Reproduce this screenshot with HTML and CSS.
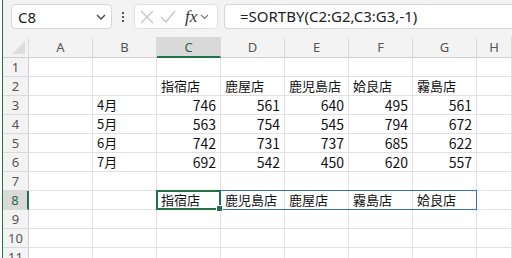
FILE: index.html
```html
<!DOCTYPE html>
<html lang="ja">
<head>
  <meta charset="UTF-8">
  <title>SORTBY</title>
  <link rel="stylesheet" href="styles.css">
</head>
<body>
  <div class="app">
    <div class="toolbar">
      <div class="namebox">
        <span>C8</span>
        <svg class="chev" width="10" height="6" viewBox="0 0 10 6"><path d="M1 1l4 4 4-4" fill="none" stroke="#444" stroke-width="1.3"/></svg>
      </div>
      <div class="dots"><i></i><i></i><i></i></div>
      <div class="fnbox">
        <svg width="14" height="14" viewBox="0 0 14 14"><path d="M1 1l12 12M13 1L1 13" stroke="#c4c4c4" stroke-width="1.2"/></svg>
        <svg width="16" height="14" viewBox="0 0 16 14"><path d="M1 7l5 5L15 1" fill="none" stroke="#c4c4c4" stroke-width="1.2"/></svg>
        <span class="fx">fx</span>
        <svg width="9" height="6" viewBox="0 0 9 6"><path d="M1 1l3.5 3.5L8 1" fill="none" stroke="#777" stroke-width="1.1"/></svg>
      </div>
      <div class="formula">=SORTBY(C2:G2,C3:G3,-1)</div>
    </div>

    <div class="sheet">
      <div class="hd corner"></div>
      <div class="hd">A</div>
      <div class="hd">B</div>
      <div class="hd active-col">C</div>
      <div class="hd">D</div>
      <div class="hd">E</div>
      <div class="hd">F</div>
      <div class="hd">G</div>
      <div class="hd">H</div>

      <div class="rh">1</div><div class="c"></div><div class="c"></div><div class="c"></div><div class="c"></div><div class="c"></div><div class="c"></div><div class="c"></div><div class="c"></div>

      <div class="rh">2</div><div class="c"></div><div class="c"></div>
      <div class="c">指宿店</div><div class="c">鹿屋店</div><div class="c">鹿児島店</div><div class="c">姶良店</div><div class="c">霧島店</div><div class="c"></div>

      <div class="rh">3</div><div class="c"></div><div class="c">4月</div>
      <div class="c num">746</div><div class="c num">561</div><div class="c num">640</div><div class="c num">495</div><div class="c num">561</div><div class="c"></div>

      <div class="rh">4</div><div class="c"></div><div class="c">5月</div>
      <div class="c num">563</div><div class="c num">754</div><div class="c num">545</div><div class="c num">794</div><div class="c num">672</div><div class="c"></div>

      <div class="rh">5</div><div class="c"></div><div class="c">6月</div>
      <div class="c num">742</div><div class="c num">731</div><div class="c num">737</div><div class="c num">685</div><div class="c num">622</div><div class="c"></div>

      <div class="rh">6</div><div class="c"></div><div class="c">7月</div>
      <div class="c num">692</div><div class="c num">542</div><div class="c num">450</div><div class="c num">620</div><div class="c num">557</div><div class="c"></div>

      <div class="rh">7</div><div class="c"></div><div class="c"></div><div class="c"></div><div class="c"></div><div class="c"></div><div class="c"></div><div class="c"></div><div class="c"></div>

      <div class="rh active-row">8</div><div class="c"></div><div class="c"></div>
      <div class="c active">
        指宿店
        <!-- spill range C8:G8 and active cell -->
        <div class="spill"></div>
        <div class="selected"></div>
      </div>
      <div class="c">鹿児島店</div><div class="c">鹿屋店</div><div class="c">霧島店</div><div class="c">姶良店</div><div class="c"></div>

      <div class="rh">9</div><div class="c"></div><div class="c"></div><div class="c"></div><div class="c"></div><div class="c"></div><div class="c"></div><div class="c"></div><div class="c"></div>

      <div class="rh">10</div><div class="c"></div><div class="c"></div><div class="c"></div><div class="c"></div><div class="c"></div><div class="c"></div><div class="c"></div><div class="c"></div>

      <div class="rh">11</div><div class="c"></div><div class="c"></div><div class="c"></div><div class="c"></div><div class="c"></div><div class="c"></div><div class="c"></div><div class="c"></div>
    </div>
  </div>
</body>
</html>
```

FILE: styles.css
```css
body {
  margin: 0;
  background: #fff;
  overflow: hidden;
  font-family: "Noto Sans", "Noto Sans CJK JP", sans-serif;
}

.app {
  margin-left: 2px;
  border-left: 1px solid #217346;
  height: 258px;
  background: #f3f3f3;
}

.toolbar {
  height: 37px;
  display: flex;
  align-items: flex-start;
  padding-top: 4px;
  box-sizing: border-box;
}

.namebox {
  margin-left: 8px;
  width: 101px;
  height: 25px;
  box-sizing: border-box;
  background: #fff;
  border: 1px solid #d6d6d6;
  border-radius: 4px;
  display: flex;
  align-items: center;
  justify-content: space-between;
  padding: 0 5px 0 6px;
  font-size: 15px;
  color: #222;
}

.namebox .chev { margin-top: 1px; }

.dots {
  width: 22px;
  height: 25px;
  display: flex;
  flex-direction: column;
  align-items: center;
  justify-content: center;
  gap: 2px;
}
.dots i {
  width: 2px;
  height: 2px;
  background: #555;
}

.fnbox {
  width: 84px;
  height: 25px;
  box-sizing: border-box;
  background: #fff;
  border: 1px solid #e0e0e0;
  border-radius: 4px;
  display: flex;
  align-items: center;
  padding-left: 5px;
  gap: 6px;
}
.fnbox .fx {
  font-family: "Liberation Serif", "DejaVu Serif", serif;
  font-style: italic;
  font-weight: normal;
  font-size: 17px;
  color: #333;
  margin-left: 3px;
  margin-right: -3px;
}

.formula {
  margin-left: 6px;
  flex: 1;
  height: 25px;
  box-sizing: border-box;
  background: #fff;
  border: 1px solid #d6d6d6;
  border-right: none;
  border-radius: 4px 0 0 4px;
  padding-left: 15px;
  font-size: 15px;
  line-height: 23px;
  color: #222;
}

.sheet {
  display: grid;
  grid-template-columns: 26px repeat(7, 64px) 1fr;
  grid-template-rows: 21px repeat(11, 19px);
  font-family: "Noto Sans CJK JP", sans-serif;
}

.hd {
  box-sizing: border-box;
  border-right: 1px solid #dadada;
  border-bottom: 1px solid #cfcfcf;
  text-align: center;
  font-family: "Noto Sans", sans-serif;
  font-size: 13px;
  line-height: 20px;
  color: #555;
}

.corner {
  position: relative;
}
.corner::after {
  content: "";
  position: absolute;
  right: 3px;
  bottom: 3px;
  border-style: solid;
  border-width: 0 0 13px 13px;
  border-color: transparent transparent #dcdcdc transparent;
}

.active-col {
  background: #d9d9d9;
  color: #1d6b3f;
  border-bottom: 2px solid #217346;
}

.rh {
  box-sizing: border-box;
  border-right: 1px solid #cfcfcf;
  border-bottom: 1px solid #dadada;
  text-align: center;
  font-family: "Noto Sans", sans-serif;
  font-size: 13px;
  line-height: 18px;
  color: #555;
}

.active-row {
  background: #d9d9d9;
  color: #1d6b3f;
  border-right: 2px solid #217346;
}

.c {
  box-sizing: border-box;
  background: #fff;
  border-right: 1px solid #e1e1e1;
  border-bottom: 1px solid #e1e1e1;
  padding: 0 4px;
  font-size: 13px;
  line-height: 18px;
  color: #111;
  white-space: nowrap;
}

.num {
  text-align: right;
  font-size: 14px;
}

.active {
  position: relative;
}

.spill {
  position: absolute;
  left: -1px;
  top: -1px;
  width: 321px;
  height: 20px;
  box-sizing: border-box;
  border: 1px solid #3c6fc4;
}

.selected {
  position: absolute;
  left: -1px;
  top: -1px;
  width: 65px;
  height: 20px;
  box-sizing: border-box;
  border: 2px solid #217346;
}
.selected::after {
  content: "";
  position: absolute;
  right: -4px;
  bottom: -4px;
  width: 5px;
  height: 5px;
  background: #217346;
  border: 1px solid #fff;
}
```
